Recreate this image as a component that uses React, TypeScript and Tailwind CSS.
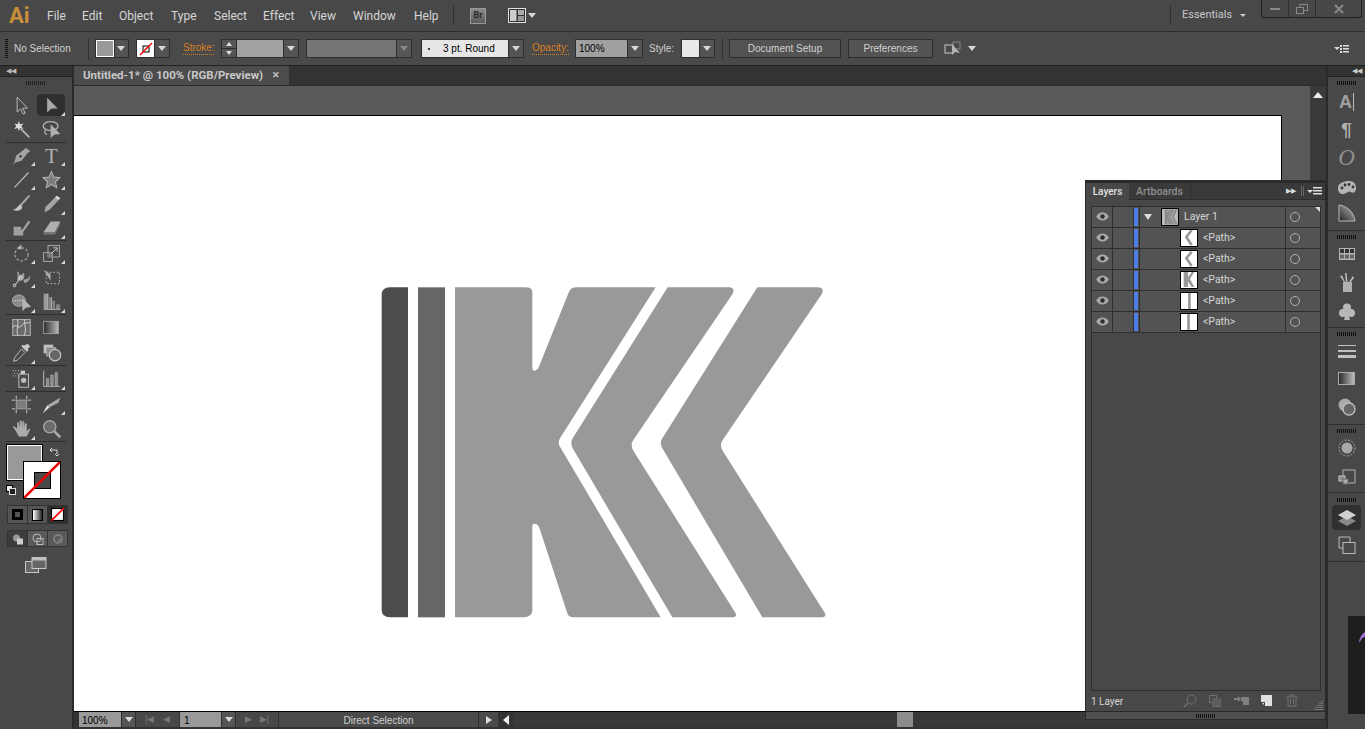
import type { ReactNode } from "react";

const K_PATH =
  "M255 37H465Q487 37 487 50V280Q490 296 505 280L597 50Q603 37 620 37H857L570 490Q562 503 570 515L872 1027H610Q595 1027 592 1015L507 755Q497 740 487 750V1005Q487 1027 460 1027H255Z";
const CHEVRON_2 =
  "M893 37H1080Q1097 40 1087 58L790 495Q780 510 790 527L1097 1015Q1102 1027 1085 1027H907L608 520Q600 503 608 490Z";
const CHEVRON_3 =
  "M1162 37H1345Q1365 40 1355 58L1058 495Q1048 510 1058 527L1365 1015Q1370 1027 1352 1027H1177L877 520Q868 503 877 490Z";

function Ico({ children }: { children: ReactNode }) {
  return (
    <svg viewBox="0 0 24 24" className="w-[21px] h-[21px]" fill="none">
      {children}
    </svg>
  );
}

function Arrow() {
  return <span className="block w-0 h-0 border-x-[4px] border-x-transparent border-t-[5px] border-t-[#d8d8d8]" />;
}

function DropBtn({ className = "" }: { className?: string }) {
  return (
    <span className={`flex items-center justify-center h-full w-[15px] bg-[#535353] border-l border-[#2e2e2e] ${className}`}>
      <Arrow />
    </span>
  );
}

function Grip({ className = "" }: { className?: string }) {
  return <div className={`h-[4px] bg-[repeating-linear-gradient(90deg,#111_0_1px,transparent_1px_2px)] ${className}`} />;
}

const stroke = "#b4b4b4";
const fill = "#a4a4a4";

const tools: Record<string, ReactNode> = {
  select: <path d="M7 2.5v17l4-3.6 2.8 6 2.4-1.1-2.8-5.8h5.4z" stroke="#c8c8c8" />,
  direct: <path d="M7 3v17l4.6-4.4L19 15z" fill="#a8a8a8" />,
  wand: (
    <>
      <path d="M9 2l1.3 4 4-1-2.4 3.2 2.4 3.2-4-1L9 14l-1.2-3.6-4 1L6 8 3.8 5l4 1z" fill="#dcdcdc" />
      <path d="M11 11l10 10" stroke={stroke} strokeWidth="2" />
    </>
  ),
  lasso: (
    <>
      <ellipse cx="11" cy="8" rx="8.5" ry="5" stroke={stroke} strokeWidth="1.5" />
      <path d="M5 12c-2 3 0 5 2 6" stroke={stroke} strokeWidth="1.5" />
      <path d="M11 6v16l4-4 7-1z" fill="#b0b0b0" />
    </>
  ),
  pen: (
    <>
      <path d="M17 3l5 4-3 2-7 9-7 2-3 3 2-4 2-7 8-6z" fill={fill} />
      <circle cx="11" cy="13" r="1.6" fill="#484848" />
    </>
  ),
  type: <text x="12" y="20" textAnchor="middle" fontFamily="'Liberation Serif',serif" fontSize="24" fill="#b0b0b0">T</text>,
  line: <path d="M4 21L20 4" stroke="#c0c0c0" strokeWidth="1.3" />,
  star: <path d="M12 3l2.8 6.3 6.7.7-5 4.6 1.5 6.7-6-3.5-6 3.5 1.5-6.7-5-4.6 6.7-.7z" fill="#7c7c7c" stroke="#b4b4b4" strokeWidth="1.2" />,
  brush: (
    <>
      <path d="M21 3L11 14" stroke="#a8a8a8" strokeWidth="2.2" />
      <path d="M11 13c-3 0-3 5-9 6 4 2 10 2 11-3z" fill="#c4c4c4" />
    </>
  ),
  pencil: (
    <>
      <path d="M18 3l4 3-12 13-6 3 1-6z" fill={fill} />
      <path d="M18 3l4 3-2 2-4-3z" fill="#d8d8d8" />
    </>
  ),
  shaper: (
    <>
      <path d="M3 11h8l2 3 7-10 2 2-8 11v4H3z" fill="#a0a0a0" />
      <path d="M11 14l3-1" stroke="#333" />
    </>
  ),
  eraser: (
    <>
      <path d="M11 5h11l-6 12H3z" fill="#b0b0b0" />
      <path d="M3 17h13l6-12v3l-6 12H3z" fill="#787878" />
    </>
  ),
  rotate: (
    <>
      <circle cx="12" cy="13" r="7.5" stroke={stroke} strokeWidth="1.2" strokeDasharray="3 2" />
      <path d="M12 2L7 5.5 12 8z" fill="#b8b8b8" />
    </>
  ),
  scale: (
    <>
      <rect x="3" y="11" width="10" height="10" stroke={stroke} />
      <rect x="8" y="3" width="13" height="13" stroke={stroke} />
      <rect x="8" y="11" width="5" height="5" fill="#777" />
      <path d="M12 12l6-6M14 5.5h4.5V10" stroke="#d0d0d0" />
    </>
  ),
  warp: (
    <>
      <path d="M6 18c1-4 4-3 7-4 3-1 3-5 1-8 0 3-3 3-5 3 1-2 0-4-2-4 1 4 1 8-1 13zM14 14c3 1 6-1 8-5 0 5-2 9-7 9z" fill="#a0a0a0" />
      <circle cx="11" cy="13" r="2" stroke="#eee" />
      <circle cx="4" cy="21" r="1.5" stroke="#eee" />
      <path d="M5 20l5-6" stroke="#eee" />
    </>
  ),
  transform: (
    <>
      <rect x="6" y="6" width="15" height="13" stroke="#c8c8c8" strokeDasharray="2 2" />
      <path d="M3 3l8 5v8z" fill="#a8a8a8" />
    </>
  ),
  builder: (
    <>
      <ellipse cx="9" cy="11" rx="7.5" ry="6.5" fill="#888" stroke="#b4b4b4" />
      <path d="M4 11h10" stroke="#eee" strokeDasharray="1.5 1.5" />
      <path d="M13 8v15l4-4 6-1z" fill="#b4b4b4" />
    </>
  ),
  chart: (
    <>
      <path d="M3 3h5v18H3z" fill="#9a9a9a" />
      <path d="M9 7h3v14H9zM13 11h3v10h-3zM17 15h5v6h-5z" fill="#808080" />
      <path d="M3 21h19M8 3v18M12 7v14" stroke="#c8c8c8" strokeWidth=".8" />
    </>
  ),
  mesh: (
    <>
      <rect x="2" y="3" width="20" height="18" fill="#6a6a6a" stroke="#c0c0c0" />
      <path d="M2 12c4-6 7 3 10-2s5-2 10-4M7 3c3 5-2 12 1 18M16 3c-2 6 3 11-1 18" stroke="#e0e0e0" />
    </>
  ),
  gradient: (
    <>
      <defs>
        <linearGradient id="toolGrad">
          <stop offset="0" stopColor="#2c2c2c" />
          <stop offset="1" stopColor="#bcbcbc" />
        </linearGradient>
      </defs>
      <rect x="3" y="5" width="17" height="14" fill="url(#toolGrad)" stroke="#a0a0a0" />
    </>
  ),
  dropper: (
    <>
      <path d="M19 2l3 3-3 3 1 2-2 1-6-6 1-2 2 1z" fill="#c8c8c8" />
      <path d="M12 8l4 4-9 9-4 1 1-4z" fill="#484848" stroke="#c8c8c8" />
    </>
  ),
  blend: (
    <>
      <rect x="3" y="3" width="11" height="10" fill="#bdbdbd" />
      <rect x="6" y="6" width="11" height="10" fill="#8a8a8a" stroke="#bdbdbd" strokeWidth=".6" />
      <circle cx="16" cy="15" r="6.5" fill="#666" stroke="#c8c8c8" strokeWidth="1.4" />
    </>
  ),
  spray: (
    <>
      <path d="M2 3h1M5 3h1M8 3h1M3.500 6h1M6.500 6h1M2 9h1M5 9h1M8 9h1" stroke="#d8d8d8" />
      <rect x="11" y="3" width="5" height="4" fill="#c8c8c8" />
      <rect x="9" y="7" width="11" height="15" fill="#4a4a4a" stroke="#c8c8c8" />
      <circle cx="14.500" cy="14" r="3" fill="#bdbdbd" />
    </>
  ),
  column: (
    <>
      <path d="M3 3v18h19" stroke="#c0c0c0" />
      <path d="M6 12h3v8H6zM11 8h3v12h-3zM16 5h3v15h-3z" fill="#8c8c8c" stroke="#c0c0c0" strokeWidth=".5" />
    </>
  ),
  artboard: (
    <>
      <rect x="6" y="7" width="12" height="10" fill="#7c7c7c" stroke="#a8a8a8" />
      <path d="M1 7h4M6 2v4M19 7h4M18 2v4M1 17h4M6 18v4M19 17h4M18 18v4" stroke="#d4d4d4" />
    </>
  ),
  slice: (
    <>
      <path d="M22 4l-2 6-10 5-3-2z" fill="#a8a8a8" />
      <path d="M7 13l3 2-8 7z" fill="#e0e0e0" />
    </>
  ),
  hand: <path d="M5 14L2 10l1-1 4 3V5l1.800-.5L10 11V3l2-.5L13 11V3.500l2 .5 1 7V6l2 .5V15l3-3 1 1-4 8H9z" fill="#ababab" />,
  zoom: (
    <>
      <circle cx="10" cy="10" r="7" fill="#6c6c6c" stroke="#a8a8a8" strokeWidth="1.6" />
      <path d="M15 15l7 7" stroke="#a8a8a8" strokeWidth="3" />
    </>
  ),
};

function Tool({ name, flyout = true, active = false }: { name: string; flyout?: boolean; active?: boolean }) {
  return (
    <div className="flex items-center justify-center">
      <div className={`relative flex items-center justify-center w-[28px] h-[22px] ${active ? "bg-[#2f2f2f] rounded-sm" : ""}`}>
        <Ico>{tools[name]}</Ico>
        {flyout && <span className="absolute right-0 bottom-0 w-0 h-0 border-l-[4px] border-l-transparent border-b-[4px] border-b-[#dcdcdc]" />}
      </div>
    </div>
  );
}

function ToolDivider() {
  return <div className="h-px mx-[6px] bg-[#2e2e2e]" />;
}

function LeftTools() {
  return (
    <div className="flex flex-col w-[72px] shrink-0 bg-[#484848]">
      <div className="h-[11px] bg-[#333] flex items-center pl-[6px] border-b border-[#222]">
        <span className="text-[7px] leading-none text-[#bbb]">◀◀</span>
      </div>
      <Grip className="w-[20px] ml-[26px] mt-[4px] opacity-70" />
      <div className="grid grid-cols-[30px_30px] auto-rows-fr px-[6px] h-[49px] mt-[8px]">
        <Tool name="select" flyout={false} />
        <Tool name="direct" active />
        <Tool name="wand" flyout={false} />
        <Tool name="lasso" flyout={false} />
      </div>
      <ToolDivider />
      <div className="grid grid-cols-[30px_30px] auto-rows-fr px-[6px] h-[97px]">
        <Tool name="pen" />
        <Tool name="type" />
        <Tool name="line" />
        <Tool name="star" />
        <Tool name="brush" flyout={false} />
        <Tool name="pencil" />
        <Tool name="shaper" flyout={false} />
        <Tool name="eraser" />
      </div>
      <ToolDivider />
      <div className="grid grid-cols-[30px_30px] auto-rows-fr px-[6px] h-[73px]">
        <Tool name="rotate" />
        <Tool name="scale" />
        <Tool name="warp" />
        <Tool name="transform" flyout={false} />
        <Tool name="builder" />
        <Tool name="chart" />
      </div>
      <ToolDivider />
      <div className="grid grid-cols-[30px_30px] auto-rows-fr px-[6px] h-[50px]">
        <Tool name="mesh" flyout={false} />
        <Tool name="gradient" flyout={false} />
        <Tool name="dropper" />
        <Tool name="blend" flyout={false} />
      </div>
      <ToolDivider />
      <div className="grid grid-cols-[30px_30px] px-[6px] h-[25px]">
        <Tool name="spray" />
        <Tool name="column" />
      </div>
      <ToolDivider />
      <div className="grid grid-cols-[30px_30px] auto-rows-fr px-[6px] h-[49px]">
        <Tool name="artboard" flyout={false} />
        <Tool name="slice" />
        <Tool name="hand" />
        <Tool name="zoom" flyout={false} />
      </div>
      <ToolDivider />
      <div className="relative h-[62px]">
        <div className="absolute left-[7px] top-[3px] w-[35px] h-[35px] bg-[#999] border border-white outline outline-1 outline-black" />
        <div className="absolute left-[24px] top-[20px] w-[36px] h-[36px] bg-white outline outline-1 outline-black flex items-center justify-center">
          <span className="w-[17px] h-[17px] bg-[#4a4a4a] border border-black" />
          <svg viewBox="0 0 36 36" className="absolute inset-0 w-[36px] h-[36px]">
            <path d="M0 36L36 0" stroke="#f00000" strokeWidth="2.500" />
          </svg>
        </div>
        <svg viewBox="0 0 12 12" className="absolute left-[49px] top-[3px] w-[12px] h-[14px]" fill="none">
          <path d="M2 4h6v4M1 4l2-2M1 4l2 2M8 10l-2-2M8 10l2-2" stroke="#d8d8d8" />
        </svg>
        <div className="absolute left-[6px] top-[43px] w-[7px] h-[7px] bg-[#eee] border border-black" />
        <div className="absolute left-[9px] top-[46px] w-[7px] h-[7px] bg-[#222] border border-[#ddd]" />
      </div>
      <div className="flex w-[61px] h-[19px] ml-[7px] mt-px bg-[#333] p-px gap-px">
        <span className="flex-1 flex items-center justify-center bg-[#555]">
          <span className="w-[11px] h-[11px] bg-black flex items-center justify-center"><span className="w-[5px] h-[5px] bg-[#555]" /></span>
        </span>
        <span className="flex-1 flex items-center justify-center bg-[#555]">
          <span className="w-[11px] h-[12px] bg-[linear-gradient(90deg,#fff,#222)] border border-black" />
        </span>
        <span className="flex-1 flex items-center justify-center bg-[#2f2f2f]">
          <svg viewBox="0 0 12 12" className="w-[13px] h-[13px]">
            <rect x=".5" y=".5" width="11" height="11" fill="#fff" stroke="#000" />
            <path d="M0 12L12 0" stroke="#f00" strokeWidth="1.500" />
          </svg>
        </span>
      </div>
      <div className="flex w-[61px] h-[17px] ml-[7px] mt-[6px] bg-[#333] p-px gap-px">
        <span className="flex-1 flex items-center justify-center bg-[#3c3c3c]">
          <svg viewBox="0 0 12 12" className="w-[12px] h-[12px]"><circle cx="4.500" cy="5" r="3.500" fill="#999" /><rect x="5" y="5.500" width="6" height="6" fill="#ccc" /></svg>
        </span>
        <span className="flex-1 flex items-center justify-center bg-[#5a5a5a]">
          <svg viewBox="0 0 12 12" className="w-[12px] h-[12px]" fill="none"><circle cx="5" cy="5" r="4" stroke="#bbb" /><rect x="5" y="5.500" width="6" height="6" stroke="#bbb" /></svg>
        </span>
        <span className="flex-1 flex items-center justify-center bg-[#5a5a5a]">
          <svg viewBox="0 0 12 12" className="w-[12px] h-[12px]" fill="none"><circle cx="6" cy="6" r="4" stroke="#888" strokeWidth="1.500" /><rect x="6" y="6" width="4" height="4" fill="#777" /></svg>
        </span>
      </div>
      <div className="flex justify-center mt-[10px]">
        <svg viewBox="0 0 22 16" className="w-[22px] h-[16px] mr-[1px]">
          <rect x=".5" y="4.500" width="13" height="11" fill="#666" stroke="#c8c8c8" />
          <rect x="7" y=".5" width="14" height="11" fill="#666" stroke="#c8c8c8" />
          <rect x="7" y=".5" width="14" height="3" fill="#c0c0c0" />
        </svg>
      </div>
    </div>
  );
}

function MenuBar() {
  return (
    <div className="flex items-center h-[31px] shrink-0 text-[12px] text-[#d6d6d6] bg-[#484848]">
      <span className="w-[47px] pl-[9px] text-[22px] leading-none font-bold text-[#c98e38]">Ai</span>
      <span className="w-[35px]">File</span>
      <span className="w-[37px]">Edit</span>
      <span className="w-[52px]">Object</span>
      <span className="w-[43px]">Type</span>
      <span className="w-[49px]">Select</span>
      <span className="w-[47px]">Effect</span>
      <span className="w-[43px]">View</span>
      <span className="w-[61px]">Window</span>
      <span className="w-[39px]">Help</span>
      <span className="w-px h-[19px] bg-[#2e2e2e]" />
      <span className="ml-[16px] w-[16px] h-[16px] flex items-center justify-center bg-[linear-gradient(#8a8a8a,#5c5c5c)] border border-[#999] text-[9px] font-bold text-[#2a2a2a]">Br</span>
      <svg viewBox="0 0 18 15" className="ml-[22px] w-[18px] h-[15px]">
        <rect x=".5" y=".5" width="17" height="14" fill="#333" stroke="#e0e0e0" />
        <rect x="2" y="2" width="6.500" height="11" fill="#ccc" />
        <rect x="10" y="2" width="6" height="5" fill="#aaa" />
        <rect x="10" y="8" width="6" height="5" fill="#999" />
      </svg>
      <span className="ml-[2px]"><Arrow /></span>
      <span className="ml-[634px] w-px h-[19px] bg-[#2e2e2e]" />
      <span className="ml-[11px] w-[58px] text-[11px] text-[#c8c8c8]">Essentials</span>
      <span className="w-0 h-0 border-x-[3px] border-x-transparent border-t-[3px] border-t-[#ccc]" />
      <div className="flex self-start ml-[15px] h-[18px] w-[101px] border-x border-b border-[#222] rounded-b-[3px] bg-[#474747]">
        <span className="flex items-center justify-center w-[27px] border-r border-[#2e2e2e]"><span className="w-[10px] h-[2px] bg-[#888]" /></span>
        <span className="flex items-center justify-center w-[27px] border-r border-[#2e2e2e]">
          <svg viewBox="0 0 12 10" className="w-[12px] h-[10px]" fill="none"><rect x="4" y=".5" width="7.500" height="6" stroke="#888" /><rect x=".5" y="3.500" width="7" height="6" fill="#474747" stroke="#888" /></svg>
        </span>
        <span className="flex flex-1 items-center justify-center">
          <svg viewBox="0 0 10 10" className="w-[10px] h-[10px]"><path d="M1 1l8 8M9 1l-8 8" stroke="#888" strokeWidth="2" /></svg>
        </span>
      </div>
    </div>
  );
}

function ControlBar() {
  return (
    <div className="flex items-center h-[34px] shrink-0 bg-[#4a4a4a] border-t border-[#2e2e2e] text-[10px] text-[#d0d0d0] font-['Liberation_Sans',sans-serif]">
      <span className="ml-[5px] w-[3px] h-[20px] bg-[repeating-linear-gradient(#111_0_1px,transparent_1px_2px)]" />
      <span className="ml-[6px] w-[74px]">No Selection</span>
      <span className="w-px h-[22px] bg-[#333]" />
      <span className="flex ml-[6px] h-[19px] w-[34px] border border-[#2e2e2e]">
        <span className="w-[19px] bg-[#999] border border-white" />
        <DropBtn />
      </span>
      <span className="flex ml-[7px] h-[19px] w-[34px] border border-[#2e2e2e]">
        <span className="w-[18px] bg-white flex items-center justify-center">
          <svg viewBox="0 0 14 14" className="w-[14px] h-[14px]" fill="none"><rect x="4" y="4" width="6" height="6" stroke="#000" /><path d="M1 13L13 1" stroke="#f00" strokeWidth="1.500" /></svg>
        </span>
        <DropBtn />
      </span>
      <span className="ml-[13px] w-[31px] text-[#d87f1f] border-b border-dotted border-[#d87f1f] leading-[12px] shrink-0">Stroke:</span>
      <span className="flex ml-[7px] h-[19px] w-[78px] border border-[#2e2e2e]">
        <span className="flex flex-col w-[15px] bg-[#555] border-r border-[#2e2e2e]">
          <span className="flex-1 flex items-center justify-center border-b border-[#2e2e2e]"><span className="w-0 h-0 border-x-[3px] border-x-transparent border-b-[4px] border-b-[#ddd]" /></span>
          <span className="flex-1 flex items-center justify-center"><span className="w-0 h-0 border-x-[3px] border-x-transparent border-t-[4px] border-t-[#ddd]" /></span>
        </span>
        <span className="flex-1 bg-[#a2a2a2]" />
        <DropBtn />
      </span>
      <span className="flex ml-[7px] h-[19px] w-[106px] border border-[#2e2e2e]">
        <span className="flex-1 bg-[#757575]" />
        <span className="flex items-center justify-center w-[15px] bg-[#575757] border-l border-[#2e2e2e]"><span className="w-0 h-0 border-x-[4px] border-x-transparent border-t-[5px] border-t-[#888]" /></span>
      </span>
      <span className="flex ml-[9px] h-[19px] w-[103px] border border-[#2e2e2e]">
        <span className="flex-1 flex items-center bg-[#e6e6e6] text-black pl-[6px]">
          <span className="w-[2px] h-[2px] bg-black rounded-full" />
          <span className="ml-[13px]">3 pt. Round</span>
        </span>
        <DropBtn />
      </span>
      <span className="ml-[8px] w-[37px] text-[#d87f1f] border-b border-dotted border-[#d87f1f] leading-[12px]">Opacity:</span>
      <span className="flex ml-[6px] h-[19px] w-[68px] border border-[#2e2e2e]">
        <span className="flex-1 flex items-center bg-[#a0a0a0] text-black pl-[3px]">100%</span>
        <DropBtn />
      </span>
      <span className="ml-[6px] w-[32px]">Style:</span>
      <span className="flex h-[19px] w-[34px] border border-[#2e2e2e]">
        <span className="w-[18px] bg-[#e8e8e8]" />
        <DropBtn />
      </span>
      <span className="ml-[7px] w-px h-[22px] bg-[#333]" />
      <span className="ml-[6px] flex items-center justify-center h-[19px] w-[112px] bg-[#535353] border border-[#2e2e2e]">Document Setup</span>
      <span className="ml-[7px] flex items-center justify-center h-[19px] w-[85px] bg-[#535353] border border-[#2e2e2e]">Preferences</span>
      <svg viewBox="0 0 18 16" className="ml-[11px] w-[18px] h-[16px]" fill="none">
        <rect x="1" y="4" width="8" height="8" stroke="#c8c8c8" />
        <rect x="9" y="1" width="7" height="7" stroke="#888" />
        <path d="M8 3v11l3-3 5 1z" fill="#b4b4b4" />
      </svg>
      <span className="ml-[6px]"><Arrow /></span>
      <span className="ml-[358px] w-0 h-0 border-x-[3px] border-x-transparent border-t-[3px] border-t-[#ddd]" />
      <svg viewBox="0 0 9 8" className="w-[9px] h-[8px]"><path d="M0 0h2v2H0zM0 3h2v2H0zM0 6h2v2H0zM3 0h6v1.500H3zM3 3h6v1.500H3zM3 6h6v1.500H3z" fill="#ddd" /></svg>
    </div>
  );
}

function Logo() {
  return (
    <svg viewBox="0 0 1410 1065" className="ml-[296px] mt-[159px] w-[470px] h-[355px]">
      <path d="M114 37H60Q35 37 35 60V1005Q35 1027 60 1027H114Z" fill="#4d4d4d" />
      <rect x="144" y="37" width="81" height="990" fill="#666" />
      <path d={K_PATH} fill="#999" />
      <path d={CHEVRON_2} fill="#999" />
      <path d={CHEVRON_3} fill="#999" />
    </svg>
  );
}

function StatusBar() {
  return (
    <div className="flex h-[18px] shrink-0 bg-[#333] border-t border-black text-[10px] text-[#d0d0d0] font-['Liberation_Sans',sans-serif]">
      <div className="flex w-full h-[15px] pl-[5px]">
        <span className="w-[42px] bg-[#999] text-black pl-[3px] leading-[17px]">100%</span>
        <span className="w-[15px] flex items-center justify-center bg-[#555] border-x border-[#2e2e2e]"><Arrow /></span>
        <span className="w-[43px] flex items-center justify-around px-[5px] bg-[#484848]">
          <span className="text-[9px] text-[#777]">|◀</span>
          <span className="text-[9px] text-[#777]">◀</span>
        </span>
        <span className="ml-[1px] w-[41px] bg-[#999] text-black pl-[4px] leading-[17px]">1</span>
        <span className="w-[15px] flex items-center justify-center bg-[#555] border-x border-[#2e2e2e]"><Arrow /></span>
        <span className="w-[42px] flex items-center justify-around px-[5px] bg-[#484848]">
          <span className="text-[9px] text-[#777]">▶</span>
          <span className="text-[9px] text-[#777]">▶|</span>
        </span>
        <span className="ml-px w-[199px] flex items-center justify-center pt-px bg-[#4a4a4a]">Direct Selection</span>
        <span className="w-[20px] flex items-center justify-center bg-[#4a4a4a] border-l border-[#2e2e2e]">
          <span className="w-0 h-0 border-y-[4px] border-y-transparent border-l-[6px] border-l-[#ddd]" />
        </span>
        <span className="w-[15px] flex items-center justify-center">
          <span className="w-0 h-0 border-y-[5px] border-y-transparent border-r-[6px] border-r-[#eee]" />
        </span>
        <div className="flex-1 bg-[#383838]">
          <div className="ml-[384px] w-[16px] h-full bg-[#8c8c8c]" />
        </div>
      </div>
    </div>
  );
}

function Document() {
  return (
    <div className="flex flex-col w-[1252px] shrink-0 min-h-0">
      <div className="flex h-[20px] shrink-0 bg-[#333] border-b border-[#2a2a2a]">
        <div className="flex items-center justify-between w-[215px] px-[9px] bg-[#4c4c4c] text-[11.500px] font-bold text-[#c8c8c8]">
          <span>Untitled-1* @ 100% (RGB/Preview)</span>
          <span className="text-[9px] leading-none">✕</span>
        </div>
      </div>
      <div className="flex flex-1 min-h-0">
        <div className="flex flex-col w-[1236px] pt-[29px] bg-[#5a5a5a]">
          <div className="flex-1 min-h-0 w-[1208px] bg-white border-t border-r border-black">
            <Logo />
          </div>
        </div>
        <div className="flex-1 bg-[#3a3a3a] flex justify-center pt-[6px]">
          <span className="w-0 h-0 border-x-[5px] border-x-transparent border-b-[6px] border-b-[#eee]" />
        </div>
      </div>
      <StatusBar />
    </div>
  );
}

function DockIcon({ className, children }: { className: string; children: ReactNode }) {
  return <div className={`flex items-center justify-center ${className}`}>{children}</div>;
}

function RightDock() {
  return (
    <div className="flex flex-col flex-1 min-w-0 bg-[#484848]">
      <div className="h-[11px] shrink-0 bg-[#333] border-b border-[#222] flex items-center justify-end pr-[3px]">
        <span className="text-[7px] leading-none text-[#ccc]">◀◀</span>
      </div>
      <div className="h-[154px] shrink-0 border-b border-[#2e2e2e]">
        <Grip className="w-[20px] ml-[9px] mt-[4px]" />
        <DockIcon className="h-[28px] mt-[3px]">
          <span className="text-[18px] leading-none font-bold text-[#a0a0a0] border-r border-[#bbb] pr-px font-['Liberation_Sans',sans-serif]">A</span>
        </DockIcon>
        <DockIcon className="h-[26px]">
          <span className="text-[19px] leading-none font-bold text-[#b0b0b0] font-['Liberation_Sans',sans-serif]">¶</span>
        </DockIcon>
        <DockIcon className="h-[30px]">
          <span className="text-[23px] leading-none italic text-[#909090] font-['Liberation_Serif',serif]">O</span>
        </DockIcon>
        <DockIcon className="h-[30px]">
          <svg viewBox="0 0 20 15" className="w-[20px] h-[15px]">
            <path d="M1 8c0-5 6-7 11-7s7 3 7 7-3 6-5 4-5 2-8 2-5-2-5-6z" fill="#b4b4b4" />
            <circle cx="5" cy="8" r="1.400" fill="#333" /><circle cx="8" cy="5" r="1.400" fill="#333" /><circle cx="12" cy="4.500" r="1.400" fill="#333" /><circle cx="16" cy="7" r="1.400" fill="#333" />
          </svg>
        </DockIcon>
        <DockIcon className="h-[22px]">
          <svg viewBox="0 0 18 18" className="w-[18px] h-[18px]">
            <defs>
              <linearGradient id="wedgeGrad" x1="0" y1="1" x2="1" y2="0">
                <stop offset="0" stopColor="#222" />
                <stop offset="1" stopColor="#bbb" />
              </linearGradient>
            </defs>
            <path d="M1 1c8 1 15 7 16 16H1z" fill="url(#wedgeGrad)" stroke="#b8b8b8" />
          </svg>
        </DockIcon>
      </div>
      <div className="h-[97px] shrink-0 border-b border-[#2e2e2e]">
        <Grip className="w-[20px] ml-[9px] mt-[4px]" />
        <DockIcon className="h-[26px] mt-[2px]">
          <svg viewBox="0 0 16 12" className="w-[16px] h-[12px]">
            <rect width="16" height="12" fill="#b4b4b4" />
            <path d="M1 1h4v4H1zM6 1h4v4H6zM11 1h4v4h-4z" fill="#333" />
            <path d="M1 6.500h4v4H1zM6 6.500h4v4H6zM11 6.500h4v4h-4z" fill="#666" />
          </svg>
        </DockIcon>
        <DockIcon className="h-[30px]">
          <svg viewBox="0 0 16 20" className="w-[16px] h-[20px]">
            <rect x="4" y="10" width="9" height="10" fill="#b0b0b0" />
            <path d="M7 10L6 1h1.500l1 9zM5 10L1 4l2-.5 3 6.500zM10 10l4-6 1 2-3.500 4z" fill="#c0c0c0" />
          </svg>
        </DockIcon>
        <DockIcon className="h-[28px]">
          <svg viewBox="0 0 16 17" className="w-[16px] h-[17px]">
            <circle cx="8" cy="4.500" r="4" fill="#b8b8b8" /><circle cx="4" cy="10" r="4" fill="#b8b8b8" /><circle cx="12" cy="10" r="4" fill="#b8b8b8" />
            <path d="M7 9h2l2 8H5z" fill="#b8b8b8" />
          </svg>
        </DockIcon>
      </div>
      <div className="h-[97px] shrink-0 border-b border-[#2e2e2e]">
        <Grip className="w-[20px] ml-[9px] mt-[4px]" />
        <DockIcon className="h-[26px] mt-[2px]">
          <svg viewBox="0 0 18 13" className="w-[18px] h-[13px]"><path d="M0 0h18v1H0zM0 5h18v2H0zM0 10h18v3H0z" fill="#c0c0c0" /></svg>
        </DockIcon>
        <DockIcon className="h-[28px]">
          <span className="w-[17px] h-[13px] bg-[linear-gradient(90deg,#2c2c2c,#bbb)] border border-[#aaa]" />
        </DockIcon>
        <DockIcon className="h-[30px]">
          <svg viewBox="0 0 18 18" className="w-[18px] h-[18px]">
            <circle cx="7" cy="7" r="6.500" fill="#aaa" />
            <circle cx="11" cy="11" r="6" fill="#666" stroke="#bbb" strokeWidth="1.400" />
          </svg>
        </DockIcon>
      </div>
      <div className="h-[68px] shrink-0 border-b border-[#2e2e2e]">
        <Grip className="w-[20px] ml-[9px] mt-[4px]" />
        <DockIcon className="h-[24px] mt-[3px]">
          <svg viewBox="0 0 18 18" className="w-[18px] h-[18px]">
            <circle cx="9" cy="9" r="5.500" fill="#a8a8a8" />
            <circle cx="9" cy="9" r="8" fill="none" stroke="#a8a8a8" strokeDasharray="2 1.500" />
          </svg>
        </DockIcon>
        <DockIcon className="h-[31px] mt-[1px]">
          <svg viewBox="0 0 18 16" className="w-[18px] h-[16px]" fill="none">
            <path d="M5 1h12v13H10" stroke="#b0b0b0" /><path d="M5 1v6" stroke="#b0b0b0" />
            <rect x="1" y="7" width="6" height="5" fill="#888" stroke="#c8c8c8" /><rect x="5" y="10" width="5" height="5" fill="#aaa" stroke="#666" />
          </svg>
        </DockIcon>
      </div>
      <div className="h-[69px] shrink-0 border-b border-[#2e2e2e]">
        <Grip className="w-[20px] ml-[9px] mt-[5px]" />
        <DockIcon className="h-[25px] mt-[3px]">
          <span className="flex items-center justify-center w-[29px] h-[25px] rounded-sm bg-[#303030]">
            <svg viewBox="0 0 18 16" className="w-[18px] h-[16px]">
              <path d="M9 6l9 5-9 5-9-5z" fill="#888" />
              <path d="M9 0l9 5-9 5-9-5z" fill="#d0d0d0" />
            </svg>
          </span>
        </DockIcon>
        <DockIcon className="h-[26px] mt-[2px]">
          <svg viewBox="0 0 18 18" className="w-[18px] h-[18px]" fill="none">
            <path d="M5 12H1V1h11v5" stroke="#bbb" /><rect x="5" y="6.500" width="12" height="11" stroke="#bbb" />
          </svg>
        </DockIcon>
      </div>
      <div className="h-[98px] ml-[20px] mt-[54px] shrink-0 bg-[#1e1e1e] overflow-hidden">
        <svg viewBox="0 0 17 98" className="w-[17px] h-[98px]">
          <path d="M11 26Q12 19 17 16V21Q14 21 12 26Z" fill="#9b6fd0" />
        </svg>
      </div>
    </div>
  );
}

function Eye() {
  return (
    <svg viewBox="0 0 14 10" className="w-[13px] h-[9px] -mt-px">
      <path d="M0 5c3-6 11-6 14 0-3 6-11 6-14 0z" fill="#aaa" />
      <circle cx="7" cy="5" r="2.500" fill="#2e2e2e" />
    </svg>
  );
}

function Thumb({ children }: { children: ReactNode }) {
  return (
    <svg viewBox="0 0 18 18" className="w-[18px] h-[18px] bg-white border border-black shrink-0" fill="none">
      {children}
    </svg>
  );
}

function LayerRow({ name, indent, thumb, twirl = false }: { name: string; indent: string; thumb: ReactNode; twirl?: boolean }) {
  return (
    <div className="flex h-[21px] bg-[#535353] border-b border-[#2e2e2e] text-[10.500px] text-[#d6d6d6]">
      <span className="flex items-center justify-center w-[21px] border-r border-[#2e2e2e]"><Eye /></span>
      <span className="w-[21px] border-r border-[#2e2e2e]" />
      <span className="flex items-center w-[5px]"><span className="w-[4px] h-[18px] bg-[#4d7de8]" /></span>
      <div className={`flex items-center w-[147px] border-r border-[#2e2e2e] border-l ${indent}`}>
        {twirl && <span className="mr-[9px] w-0 h-0 border-x-[4px] border-x-transparent border-t-[6px] border-t-[#ddd]" />}
        {thumb}
        <span className="ml-[5px]">{name}</span>
      </div>
      <span className="relative flex flex-1 items-center pl-[4px]">
        <span className="w-[10px] h-[10px] rounded-full border border-[#b0b0b0]" />
        {twirl && <span className="absolute right-0 top-0 w-0 h-0 border-l-[5px] border-l-transparent border-t-[5px] border-t-[#ddd]" />}
      </span>
    </div>
  );
}

function LayersPanel() {
  return (
    <div className="absolute left-[1085px] top-[180px] flex flex-col w-[241px] h-[540px] bg-[#484848] border border-[#2a2a2a] border-t-[3px]">
      <div className="flex items-center h-[17px] shrink-0 bg-[#3a3a3a] border-b border-[#2e2e2e] text-[10.500px] font-medium">
        <span className="flex items-center justify-center w-[43px] h-[17px] pt-px bg-[#484848] text-[#e0e0e0] text-[10px]">Layers</span>
        <span className="flex items-center justify-center w-[62px] h-full pt-px border-r border-[#2e2e2e] text-[#8e8e8e]">Artboards</span>
        <span className="ml-[95px] text-[7px] text-[#ddd]">▶▶</span>
        <span className="ml-[5px] w-[3px] h-[10px] border-x border-[#666]" />
        <span className="ml-[3px] w-0 h-0 border-x-[3px] border-x-transparent border-t-[3px] border-t-[#ddd]" />
        <svg viewBox="0 0 9 8" className="w-[9px] h-[8px]"><path d="M0 0h9v1.500H0zM0 3h9v1.500H0zM0 6h9v1.500H0z" fill="#ddd" /></svg>
      </div>
      <div className="flex-1 min-h-0 ml-[5px] mr-[4px] mt-[6px] border border-[#2e2e2e]">
        <LayerRow
          name="Layer 1"
          indent="pl-[4px]"
          twirl
          thumb={
            <svg viewBox="0 0 1410 1065" preserveAspectRatio="none" className="w-[18px] h-[18px] bg-white border border-black shrink-0">
              <rect x="0" width="1410" height="1065" fill="#bbb" />
              <path d={K_PATH} fill="#888" /><path d={CHEVRON_2} fill="#888" /><path d={CHEVRON_3} fill="#888" />
            </svg>
          }
        />
        <LayerRow name="<Path>" indent="pl-[40px]" thumb={<Thumb><path d="M12 0L6 8l6 9" stroke="#999" strokeWidth="3" /></Thumb>} />
        <LayerRow name="<Path>" indent="pl-[40px]" thumb={<Thumb><path d="M12 1L6 8l6 9" stroke="#999" strokeWidth="3" /></Thumb>} />
        <LayerRow name="<Path>" indent="pl-[40px]" thumb={<Thumb><path d="M3 0h5v6l4-6h3L10 8l5 9h-3L8 11v6H3z" fill="#999" /></Thumb>} />
        <LayerRow name="<Path>" indent="pl-[40px]" thumb={<Thumb><rect x="8" width="3" height="18" fill="#999" /></Thumb>} />
        <LayerRow name="<Path>" indent="pl-[40px]" thumb={<Thumb><rect x="7" width="3" height="18" fill="#999" /></Thumb>} />
      </div>
      <div className="relative flex items-center h-[20px] shrink-0 pl-[5px] text-[10px] text-[#d6d6d6]">
        <span>1 Layer</span>
        <svg viewBox="0 0 14 14" className="absolute left-[97px] top-[3px] w-[14px] h-[14px]" fill="none">
          <circle cx="8.500" cy="5.500" r="4.500" stroke="#707070" /><path d="M5 9l-4 4" stroke="#707070" strokeWidth="1.500" />
        </svg>
        <svg viewBox="0 0 12 12" className="absolute left-[123px] top-[4px] w-[12px] h-[12px]" fill="none">
          <rect x=".5" y=".5" width="7" height="7" stroke="#707070" /><rect x="4" y="4" width="7.500" height="7.500" fill="#5c5c5c" stroke="#666" />
        </svg>
        <svg viewBox="0 0 15 10" className="absolute left-[148px] top-[4px] w-[15px] h-[10px]">
          <path d="M0 3h4V1l3 3-3 3V5H0zM7 2h8v8H9V7L7 6z" fill="#808080" />
        </svg>
        <svg viewBox="0 0 11 11" className="absolute left-[175px] top-[4px] w-[11px] h-[11px]">
          <path d="M0 0h11v11H4V7H0z" fill="#e0e0e0" /><path d="M1 8h2v2z" fill="#e0e0e0" />
        </svg>
        <svg viewBox="0 0 12 12" className="absolute left-[200px] top-[3px] w-[12px] h-[13px]" fill="none">
          <path d="M0 2.500h12M4 2.500V.5h4v2M2 3v8.500h8V3M4.500 4.500v5M7.500 4.500v5" stroke="#707070" />
        </svg>
        <svg viewBox="0 0 9 9" className="absolute right-[2px] bottom-[1px] w-[9px] h-[9px]">
          <path d="M8 0v1M6 2v1M8 2v1M4 4v1M6 4v1M8 4v1M2 6v1M4 6v1M6 6v1M8 6v1M0 8v1M2 8v1M4 8v1M6 8v1M8 8v1" stroke="#999" />
        </svg>
      </div>
      <div className="flex items-center justify-center h-[8px] shrink-0 bg-[#505050] border-t border-[#2a2a2a]">
        <Grip className="w-[20px]" />
      </div>
    </div>
  );
}

export default function App() {
  return (
    <div className="relative flex flex-col w-[1365px] h-[729px] overflow-hidden bg-[#484848] font-['Roboto',sans-serif]">
      <MenuBar />
      <ControlBar />
      <div className="flex flex-1 min-h-0 border-t border-[#222]">
        <LeftTools />
        <div className="w-[2px] shrink-0 bg-[#2a2a2a]" />
        <Document />
        <div className="w-[2px] shrink-0 bg-[#2a2a2a]" />
        <RightDock />
      </div>
      <LayersPanel />
    </div>
  );
}
